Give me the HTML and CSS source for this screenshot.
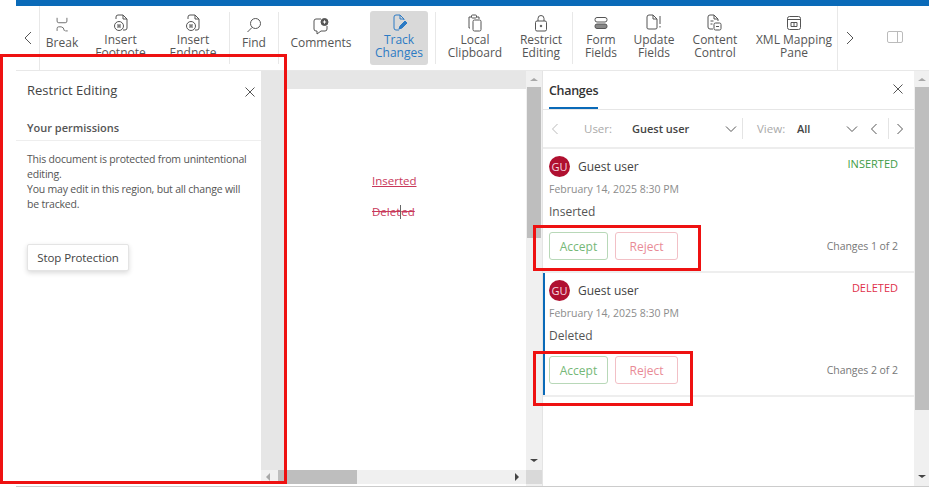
FILE: index.html
```html
<!DOCTYPE html>
<html lang="en">
<head>
  <meta charset="UTF-8">
  <title>Document Editor - Restrict Editing</title>
  <link rel="stylesheet" href="styles.css">
</head>
<body>
  <div class="app">
    <div class="topbar"></div>

    <div class="toolbar">
      <button class="nav nav-left">
        <svg width="10" height="14" viewBox="0 0 10 14"><path d="M8 1 2 7l6 6"/></svg>
      </button>
      <div class="tool tool-break">
        <svg width="18" height="22" viewBox="0 0 18 22"><path d="M3 1v4q0 2 2 2h8q2 0 2-2V1M3 17v-3q0-2 2-2h3q3 0 4 5M13 17h3"/></svg>
        <span>Break</span>
      </div>
      <div class="tool tool-note two">
        <svg width="16" height="18" viewBox="0 0 16 18"><path d="M10 1H5Q3 1 3 3v2M10 1l4 4v9q0 2-2 2h-2M10 1v4h4"/><circle cx="6" cy="12" r="4.5"/><path d="M5 10v4M7 10v4M5 12h2"/></svg>
        <span>Insert<br>Footnote</span>
      </div>
      <div class="tool tool-end two">
        <svg width="16" height="18" viewBox="0 0 16 18"><path d="M10 1H5Q3 1 3 3v2M10 1l4 4v9q0 2-2 2h-2M10 1v4h4"/><circle cx="6" cy="12" r="4.5"/><path d="M5 10v4M7 10v4M5 12h2"/></svg>
        <span>Insert<br>Endnote</span>
      </div>
      <div class="sep"></div>
      <div class="tool tool-find">
        <svg width="16" height="18" viewBox="0 0 16 18"><circle cx="9.5" cy="6.500" r="5"/><path d="M6 10.500 1.500 15"/></svg>
        <span>Find</span>
      </div>
      <div class="sep"></div>
      <div class="tool tool-comments">
        <svg width="18" height="18" viewBox="0 0 18 18"><path d="M9 2H4Q2 2 2 4v8q0 2 2 2h1v3l4-3h4q2 0 2-2V9"/><circle cx="12.500" cy="5" r="3.500" fill="#555"/><path class="plus" d="M10.800 5h3.400M12.500 3.300v3.400"/></svg>
        <span>Comments</span>
      </div>
      <div class="tool tool-track two">
        <svg width="16" height="18" viewBox="0 0 16 18"><path d="M9 1H5Q3 1 3 3v11q0 2 2 2h3M9 1l4 4v1M9 1v4h4"/><path class="pen" d="M8 15l1-3 5-5 2 2-5 5z"/></svg>
        <span>Track<br>Changes</span>
      </div>
      <div class="sep sep-track"></div>
      <div class="tool tool-local two">
        <svg width="16" height="18" viewBox="0 0 16 18"><path d="M3 14H2V3h2M10 3h2v2"/><rect x="4.500" y="1" width="5" height="3" rx="1"/><rect x="6" y="6" width="8" height="11" rx="1.500"/></svg>
        <span>Local<br>Clipboard</span>
      </div>
      <div class="tool tool-restrict two">
        <svg width="14" height="18" viewBox="0 0 14 18"><rect x="1.500" y="7" width="11" height="10" rx="1.500"/><path d="M4 7V4.500a3 3 0 0 1 6 0V7"/><circle cx="7" cy="12" r=".8" fill="#555"/></svg>
        <span>Restrict<br>Editing</span>
      </div>
      <div class="sep"></div>
      <div class="tool tool-form two">
        <svg width="14" height="14" viewBox="0 0 14 14"><rect x="1" y="1.500" width="12" height="4.500" rx="2"/><rect x="1" y="8" width="12" height="4.500" rx="2" fill="#888"/></svg>
        <span>Form<br>Fields</span>
      </div>
      <div class="tool tool-update two">
        <svg width="16" height="18" viewBox="0 0 16 18"><path d="M7 1H3Q1 1 1 3v11q0 1 2 1h6q2 0 2-1V5zM7 1v4h4M14 2v8M14 12v1.500"/></svg>
        <span>Update<br>Fields</span>
      </div>
      <div class="tool tool-control two">
        <svg width="16" height="18" viewBox="0 0 16 18"><path d="M7 1H3Q1 1 1 3v10q0 2 2 2h3M7 1l4 4v2M7 1v4h4M3.500 7h3M3.500 10h2"/><rect x="7" y="9" width="7" height="7" rx="1.500"/><path d="M9 12.500h3"/></svg>
        <span>Content<br>Control</span>
      </div>
      <div class="tool tool-xml two">
        <svg width="16" height="16" viewBox="0 0 16 16"><rect x="1.500" y="1.500" width="13" height="13" rx="2"/><path d="M1.500 4.500h13M5 7.500h6v4H5zM8 7.500v4"/></svg>
        <span>XML Mapping<br>Pane</span>
      </div>
      <button class="nav nav-right">
        <svg width="10" height="14" viewBox="0 0 10 14"><path d="M2 1l6 6-6 6"/></svg>
      </button>
      <div class="pane-toggle">
        <svg width="16" height="12" viewBox="0 0 16 12"><rect x=".5" y=".5" width="15" height="11" rx="1.500"/><path d="M10.500 .5v11"/></svg>
      </div>
    </div>

    <div class="workspace">
      <aside class="restrict">
        <div class="restrict-head">
          <h2>Restrict Editing</h2>
          <svg class="close" width="12" height="12" viewBox="0 0 12 12"><path d="M1.500 1.500l9 9M10.500 1.500l-9 9"/></svg>
        </div>
        <h3>Your permissions</h3>
        <p>This document is protected from unintentional editing.<br>You may edit in this region, but all change will be tracked.</p>
        <button class="stop">Stop Protection</button>
      </aside>

      <main class="doc">
        <div class="doc-view">
          <div class="doc-top"></div>
          <div class="doc-body">
            <div class="doc-gutter"></div>
            <div class="page">
              <ins>Inserted</ins>
              <div><del>Delet<span class="caret"></span>ed</del></div>
            </div>
          </div>
          <div class="hscroll">
            <i class="arrow arrow-left"></i>
            <div class="hthumb"></div>
            <i class="arrow arrow-right"></i>
          </div>
        </div>
        <div class="vscroll doc-scroll">
          <i class="arrow arrow-up"></i>
          <div class="vthumb vthumb-doc"></div>
          <i class="arrow arrow-down"></i>
          <div class="corner"></div>
        </div>
      </main>

      <section class="changes">
        <div class="changes-tabs">
          <span class="tab">Changes</span>
          <svg class="close" width="12" height="12" viewBox="0 0 12 12"><path d="M1.500 1.500l9 9M10.500 1.500l-9 9"/></svg>
        </div>
        <div class="filters">
          <svg class="chev chev-dim chev-first" width="8" height="12" viewBox="0 0 8 12"><path d="M6.500 1 1.500 6l5 5"/></svg>
          <span class="flabel flabel-user">User:</span>
          <strong class="fuser">Guest user</strong>
          <svg class="chev chev-down" width="12" height="8" viewBox="0 0 12 8"><path d="M1 1.500l5 5 5-5"/></svg>
          <div class="fsep"></div>
          <span class="flabel flabel-view">View:</span>
          <strong class="fview">All</strong>
          <svg class="chev chev-down" width="12" height="8" viewBox="0 0 12 8"><path d="M1 1.500l5 5 5-5"/></svg>
          <svg class="chev chev-prev" width="8" height="12" viewBox="0 0 8 12"><path d="M6.500 1 1.500 6l5 5"/></svg>
          <div class="fsep fsep-nav"></div>
          <svg class="chev" width="8" height="12" viewBox="0 0 8 12"><path d="M1.500 1l5 5-5 5"/></svg>
        </div>

        <article class="card">
          <div class="card-head">
            <span class="avatar">GU</span>
            <span class="who">Guest user</span>
            <span class="kind kind-ins">INSERTED</span>
          </div>
          <div class="when">February 14, 2025 8:30 PM</div>
          <div class="what">Inserted</div>
          <div class="card-foot">
            <button class="accept">Accept</button>
            <button class="reject">Reject</button>
            <span class="count">Changes 1 of 2</span>
          </div>
        </article>

        <article class="card card-active">
          <div class="card-head">
            <span class="avatar">GU</span>
            <span class="who">Guest user</span>
            <span class="kind kind-del">DELETED</span>
          </div>
          <div class="when">February 14, 2025 8:30 PM</div>
          <div class="what">Deleted</div>
          <div class="card-foot">
            <button class="accept">Accept</button>
            <button class="reject">Reject</button>
            <span class="count">Changes 2 of 2</span>
          </div>
        </article>
      </section>

      <div class="vscroll panel-scroll">
        <i class="arrow arrow-up"></i>
        <div class="vthumb vthumb-panel"></div>
        <i class="arrow arrow-down"></i>
      </div>
    </div>
  </div>

  <!-- red callouts drawn over the screenshot -->
  <div class="callout callout-panel"></div>
  <div class="callout callout-first"></div>
  <div class="callout callout-second"></div>
</body>
</html>
```

FILE: styles.css
```css
/* Global */
html, body {
  margin: 0;
  padding: 0;
  height: 488px;
  overflow: hidden;
  background-color: #fff;
}

body {
  font-family: "Open Sans", "Noto Sans", sans-serif;
  font-size: 12px;
  color: #444;
}

button {
  font-family: inherit;
  cursor: pointer;
}

svg {
  display: block;
  fill: none;
  stroke: #555;
  stroke-width: 1;
}

.app {
  width: 913px;
  height: 486px;
  margin-left: 16px;
  display: flex;
  flex-direction: column;
  border-bottom: 1px solid #ccc;
}

.topbar {
  height: 6px;
  background-color: #0a6ab8;
}

/* Toolbar */
.toolbar {
  height: 64px;
  display: flex;
  border-bottom: 1px solid #e8e8e8;
}

.nav {
  width: 24px;
  padding: 0;
  border: none;
  background: none;
  display: flex;
  align-items: center;
  justify-content: center;
  flex: none;
}

.nav-left {
  border-right: 1px solid #e8e8e8;
  padding-left: 1px;
  box-sizing: border-box;
}

.nav-right {
  border-left: 1px solid #e8e8e8;
}

.tool {
  display: flex;
  flex-direction: column;
  align-items: center;
  flex: none;
  padding-top: 11px;
  box-sizing: border-box;
  text-align: center;
  line-height: 13px;
  font-size: 12px;
  color: #555;
}

.tool svg {
  height: 18px;
  margin-bottom: 1px;
}

.tool.two {
  padding-top: 8px;
}

.tool-break { width: 44px; }
.tool-note { width: 73px; }
.tool-end { width: 72px; }
.tool-find { width: 48px; }
.tool-comments { width: 84px; }

.tool.tool-track {
  width: 58px;
  height: 54px;
  margin: 5px 7px 0 7px;
  padding-top: 3px;
  background-color: #d9d9d9;
  border-radius: 3px;
  color: #2d7bc4;
}

.tool-track svg { stroke: #2d7bc4; }
.tool-track .pen { fill: #2d7bc4; }
.tool-local { width: 78px; }
.tool-restrict { width: 54px; margin-right: 4px; }
.tool-form { width: 56px; }
.tool-update { width: 50px; }
.tool-control { width: 72px; }
.tool-xml { width: 86px; }

.plus { stroke: #fff; }

.sep {
  width: 1px;
  height: 52px;
  margin-top: 6px;
  background-color: #e8e8e8;
  flex: none;
}

.pane-toggle {
  margin-left: 26px;
  padding-top: 25px;
}

.pane-toggle svg { stroke: #bbb; }

/* Workspace */
.workspace {
  flex: 1;
  min-height: 0;
  display: flex;
}

.restrict {
  width: 245px;
  flex: none;
  box-sizing: border-box;
}

.restrict-head {
  height: 49px;
  padding: 10px 5px 0 11px;
  display: flex;
  justify-content: space-between;
  box-sizing: border-box;
}

.restrict-head .close { margin-top: 5px; }

.restrict h2 {
  margin: 0;
  font-size: 13px;
  line-height: 18px;
  font-weight: 500;
  color: #444;
}

.restrict h3 {
  margin: 0;
  padding: 0 0 4px 11px;
  height: 16px;
  font-size: 11px;
  line-height: 16px;
  font-weight: 600;
  color: #555;
  border-bottom: 1px solid #eee;
}

.restrict p {
  margin: 11px 12px 0 11px;
  font-size: 10.5px;
  letter-spacing: -0.2px;
  line-height: 15px;
  color: #555;
}

.stop {
  display: block;
  margin: 32px 0 0 11px;
  width: 102px;
  height: 27px;
  padding: 0;
  font-size: 11.5px;
  font-weight: 500;
  letter-spacing: -0.1px;
  color: #444;
  background-color: #fff;
  border: 1px solid #e4e4e4;
  border-radius: 2px;
  box-shadow: 0 2px 5px rgba(0, 0, 0, 0.15);
}

/* Document */
.doc {
  width: 281px;
  flex: none;
  display: flex;
}

.doc-view {
  width: 265px;
  display: flex;
  flex-direction: column;
}

.doc-top {
  height: 18px;
  background-color: #e6e6e6;
}

.doc-body {
  flex: 1;
  display: flex;
}

.doc-gutter {
  width: 24px;
  background-color: #e6e6e6;
}

.page {
  flex: 1;
  padding: 83px 0 0 87px;
  font-size: 11.5px;
  line-height: 17px;
  color: #c8385a;
}

.page ins {
  display: block;
  margin-bottom: 14px;
}

.caret {
  display: inline-block;
  width: 1px;
  height: 14px;
  margin-bottom: -3px;
  background-color: #666;
}

.hscroll {
  height: 14px;
  margin-bottom: 2px;
  display: flex;
  align-items: center;
  background-color: #f0f0f0;
}

.hthumb {
  width: 79px;
  height: 14px;
  margin-left: 8px;
  background-color: #bebebe;
}

.vscroll {
  flex: none;
  background-color: #f0f0f0;
  display: flex;
  flex-direction: column;
  align-items: center;
}

.doc-scroll {
  width: 16px;
}

.panel-scroll {
  width: 15px;
}

.vthumb {
  width: 14px;
  margin-top: 6px;
  background-color: #bebebe;
}

.vthumb-doc { height: 151px; }
.vthumb-panel { height: 323px; }

.corner {
  width: 16px;
  height: 14px;
  margin-top: 8px;
  margin-bottom: 2px;
  background-color: #d9d9d9;
}

.arrow {
  display: block;
  width: 0;
  height: 0;
  flex: none;
  border-style: solid;
  border-color: transparent;
}

.arrow-up {
  margin-top: 7px;
  border-width: 0 4px 3px;
  border-bottom-color: #a8a8a8;
}

.arrow-down {
  margin-top: auto;
  border-width: 3px 4px 0;
  border-top-color: #444;
}

.panel-scroll .arrow-down { margin-bottom: 8px; }

.arrow-left {
  margin-left: 5px;
  border-width: 4px 4px 4px 0;
  border-right-color: #a8a8a8;
}

.arrow-right {
  margin-left: auto;
  margin-right: 7px;
  border-width: 4px 0 4px 4px;
  border-left-color: #444;
}

/* Changes panel */
.changes {
  width: 372px;
  flex: none;
  box-sizing: border-box;
  border-left: 1px solid #e4e4e4;
}

.changes-tabs {
  height: 39px;
  padding-left: 6px;
  display: flex;
  justify-content: space-between;
  box-sizing: border-box;
  border-bottom: 1px solid #e6e6e6;
}

.tab {
  height: 38px;
  box-sizing: border-box;
  padding-top: 11px;
  font-size: 12.5px;
  letter-spacing: -0.3px;
  line-height: 17px;
  font-weight: 600;
  color: #333;
  border-bottom: 2px solid #0a6ab8;
}

.changes-tabs .close {
  margin: 12px 10px 0 0;
}

.filters {
  height: 39px;
  display: flex;
  align-items: center;
  box-sizing: border-box;
  border-bottom: 2px solid #ededed;
  font-size: 11.5px;
}

.chev-first { margin-left: 8px; }
.chev-dim { stroke: #bbb; }
.chev-down { flex: none; }
.chev-prev { margin-left: 12px; flex: none; }

.flabel {
  color: #aaa;
}

.flabel-user { width: 48px; margin-left: 25px; }
.flabel-view { width: 40px; margin-left: 14px; }

.fuser {
  width: 93px;
  font-size: 11px;
  font-weight: 600;
  color: #444;
}

.fview {
  width: 49px;
  font-size: 11px;
  font-weight: 600;
  color: #444;
}

.fsep {
  width: 1px;
  height: 21px;
  margin-left: 5px;
  background-color: #e4e4e4;
}

.fsep-nav {
  margin: 0 7px 0 10px;
}

.card {
  height: 124px;
  box-sizing: border-box;
  padding: 7px 16px 0 6px;
  border-bottom: 2px solid #eee;
}

.card-active {
  box-shadow: inset 2px 0 0 #0a6ab8;
}

.card-head {
  display: flex;
  align-items: center;
}

.avatar {
  width: 21px;
  height: 21px;
  border-radius: 50%;
  background-color: #b01030;
  color: #f5dbe0;
  font-size: 11px;
  line-height: 21px;
  text-align: center;
  flex: none;
}

.who {
  margin-left: 8px;
  font-size: 12px;
  font-weight: 500;
  color: #444;
}

.kind {
  margin-left: auto;
  margin-top: -7px;
  font-size: 11px;
}

.kind-ins { color: #3f9c46; }
.kind-del { color: #e0304a; }

.when {
  margin-top: 4px;
  font-size: 10.5px;
  line-height: 16px;
  color: #8c8c8c;
}

.what {
  margin-top: 6px;
  font-size: 12px;
  line-height: 17px;
  color: #555;
}

.card-foot {
  margin-top: 12px;
  display: flex;
  align-items: center;
}

.card-foot button {
  height: 28px;
  padding: 0;
  font-size: 12px;
  font-weight: 500;
  background-color: #fff;
  border-radius: 3px;
}

.accept {
  width: 59px;
  color: #75b878;
  border: 1px solid #b8d8b8;
}

.reject {
  width: 63px;
  margin-left: 7px;
  color: #e98b96;
  border: 1px solid #f2c0c6;
}

.count {
  margin-left: auto;
  font-size: 10.5px;
  letter-spacing: -0.05px;
  color: #777;
}

/* Red callouts */
.callout {
  position: absolute;
  box-sizing: border-box;
  border: 3px solid #ee1111;
}

.callout-panel { left: 0; top: 54px; width: 287px; height: 430px; }
.callout-first { left: 533px; top: 225px; width: 168px; height: 46px; }
.callout-second { left: 533px; top: 351px; width: 160px; height: 55px; }
```
